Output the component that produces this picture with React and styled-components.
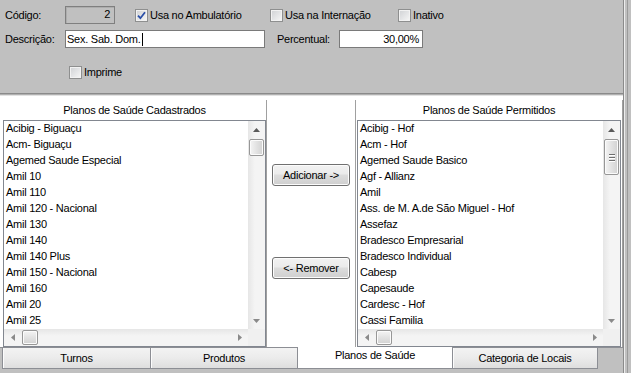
import React from 'react'
import styled, { createGlobalStyle, css } from 'styled-components'

const GlobalStyle = createGlobalStyle`
  * {
    margin: 0;
    padding: 0;
    box-sizing: border-box;
  }
  body {
    background: #c0c0c0;
    font-family: 'Liberation Sans', Arial, sans-serif;
    font-size: 11px;
    letter-spacing: -0.25px;
    color: #000;
  }
`

const Window = styled.div`
  display: flex;
  width: 631px;
  height: 373px;
  overflow: hidden;
  background: #c0c0c0;
`

const Form = styled.div`
  display: flex;
  flex-direction: column;
  width: 624px;
  border-right: 1px solid #8a8a8a;
`

const Edge = styled.div`
  flex: 1;
  background: linear-gradient(to right, #ececec 0 1px, #c0c0c0 1px 3px, #9a9a9a 3px 4px, #c0c0c0 4px);
`

const TopPanel = styled.div`
  display: flex;
  flex-direction: column;
  height: 94px;
  padding: 6px 0 0 5px;
  border-bottom: 1px solid #8a8a8a;
`

const FieldRow = styled.div`
  display: flex;
  align-items: center;
  height: 18px;
  margin-top: ${p => p.$mt || 0}px;
  padding-left: ${p => p.$pl || 0}px;
`

const Label = styled.span`
  flex-shrink: 0;
  width: ${p => p.$w}px;
  margin-left: ${p => p.$ml || 0}px;
  white-space: nowrap;
`

const ReadOnlyBox = styled.div`
  width: 50px;
  height: 18px;
  border: 1px solid #7f7f7f;
  box-shadow: inset 1px 1px 0 #adadad;
  padding-right: 4px;
  text-align: right;
  line-height: 15px;
`

const TextBox = styled.div`
  display: flex;
  align-items: center;
  justify-content: ${p => (p.$right ? 'flex-end' : 'flex-start')};
  width: ${p => p.$w}px;
  height: 18px;
  padding: 0 ${p => (p.$right ? 3 : 1)}px;
  background: #fff;
  border: 1px solid #7a7a7a;
  white-space: nowrap;
`

const Caret = styled.span`
  display: inline-block;
  width: 1px;
  height: 13px;
  margin-left: 1px;
  background: #000;
`

const CheckItem = styled.div`
  display: flex;
  align-items: center;
  gap: 2px;
  width: ${p => (p.$w ? `${p.$w}px` : 'auto')};
  margin-left: ${p => p.$ml || 0}px;
  white-space: nowrap;
`

const Box = styled.span`
  display: flex;
  align-items: center;
  justify-content: center;
  width: 13px;
  height: 13px;
  border: 1px solid #8e8f8f;
  background: linear-gradient(135deg, #cfd1d4, #f7f7f7);
  box-shadow: inset 0 0 0 1px #f2f2f2;
`

const Sep = styled.div`
  height: 2px;
  border-top: 1px solid #b0b0b0;
  border-bottom: 1px solid #e2e2e2;
`

const Page = styled.div`
  display: grid;
  grid-template-columns: 267px 88px 268px;
  height: 252px;
  padding-top: 4px;
  background: #fff;
  border-bottom: 1px solid #8c8e94;
`

const Group = styled.div`
  display: flex;
  flex-direction: column;
  min-height: 0;
  ${p => p.$side === 'left' && css`
    padding-left: 3px;
    border-right: 1px solid #a0a0a0;
  `}
  ${p => p.$side === 'right' && css`
    padding: 0 1px;
    border-left: 1px solid #a0a0a0;
    border-right: 1px solid #a0a0a0;
  `}
`

const GroupTitle = styled.div`
  height: 20px;
  line-height: 20px;
  text-align: center;
  white-space: nowrap;
`

const ListBox = styled.div`
  flex: 1;
  display: grid;
  grid-template-columns: 1fr 17px;
  grid-template-rows: 1fr 17px;
  min-height: 0;
  border: 1px solid #828790;
`

const Items = styled.div`
  overflow: hidden;
  min-height: 0;
`

const Item = styled.div`
  height: 16px;
  line-height: 15px;
  padding-left: 2px;
  white-space: nowrap;
`

const VScroll = styled.div`
  display: flex;
  flex-direction: column;
  min-height: 0;
  background: linear-gradient(to right, #e6e6e6, #f4f4f4 40%, #f4f4f4);
`

const HScroll = styled.div`
  display: flex;
  background: linear-gradient(#e6e6e6, #f4f4f4 40%, #f4f4f4);
`

const Corner = styled.div`
  background: #f0f0f0;
`

const Arrow = styled.div`
  display: flex;
  align-items: center;
  justify-content: center;
  flex-shrink: 0;
  width: 17px;
  height: 17px;
`

const Spacer = styled.div`
  flex: 1;
`

const Thumb = styled.div`
  display: flex;
  flex-direction: ${p => (p.$horizontal ? 'row' : 'column')};
  align-items: center;
  justify-content: center;
  gap: 2px;
  flex-shrink: 0;
  width: ${p => (p.$horizontal ? `${p.$len}px` : '15px')};
  height: ${p => (p.$horizontal ? '15px' : `${p.$len}px`)};
  margin: 1px;
  border: 1px solid #979797;
  border-radius: 2px;
  background: ${p =>
    p.$horizontal
      ? 'linear-gradient(#f4f4f4, #e2e2e2 50%, #d2d2d2)'
      : 'linear-gradient(to right, #f4f4f4, #e2e2e2 50%, #d2d2d2)'};
  box-shadow: inset 0 0 0 1px #fbfbfb;
`

const Grip = styled.span`
  display: block;
  width: 6px;
  height: 1px;
  background: #6e6e6e;
  box-shadow: 0 1px 0 #fff;
`

const Middle = styled.div`
  display: flex;
  flex-direction: column;
  align-items: center;
  padding-top: 64px;
`

const Button = styled.div`
  width: 78px;
  height: 22px;
  margin-top: ${p => p.$mt || 0}px;
  border: 1px solid #707070;
  border-radius: 3px;
  background: linear-gradient(#f2f2f2, #ebebeb 45%, #dddddd 50%, #cfcfcf);
  box-shadow: inset 0 0 0 1px #fcfcfc;
  line-height: 20px;
  text-align: center;
  white-space: nowrap;
`

const TabBar = styled.div`
  display: flex;
  align-items: flex-start;
  height: 22px;
  padding-left: 2px;
`

const Tab = styled.div`
  width: ${p => p.$w}px;
  height: 21px;
  border-right: 1px solid #8c8e94;
  border-bottom: 1px solid #8c8e94;
  border-left: ${p => (p.$first ? '1px solid #8c8e94' : 'none')};
  background: linear-gradient(#f3f3f3, #ebebeb 50%, #dedede);
  box-shadow: inset 1px 0 0 #fcfcfc;
  line-height: 20px;
  text-align: center;
  white-space: nowrap;
  ${p => p.$active && css`
    height: 22px;
    margin-top: -1px;
    background: #fff;
    box-shadow: none;
    line-height: 16px;
  `}
`

const leftItems = [
  'Acibig - Biguaçu',
  'Acm- Biguaçu',
  'Agemed Saude Especial',
  'Amil 10',
  'Amil 110',
  'Amil 120 - Nacional',
  'Amil 130',
  'Amil 140',
  'Amil 140 Plus',
  'Amil 150 - Nacional',
  'Amil 160',
  'Amil 20',
  'Amil 25',
]

const rightItems = [
  'Acibig - Hof',
  'Acm - Hof',
  'Agemed Saude Basico',
  'Agf - Allianz',
  'Amil',
  'Ass. de M. A.de São Miguel - Hof',
  'Assefaz',
  'Bradesco Empresarial',
  'Bradesco Individual',
  'Cabesp',
  'Capesaude',
  'Cardesc - Hof',
  'Cassi Familia',
]

const tabs = [
  { label: 'Turnos', w: 149 },
  { label: 'Produtos', w: 147 },
  { label: 'Planos de Saúde', w: 155, active: true },
  { label: 'Categoria de Locais', w: 145 },
]

const Tri = ({ dir, color = '#5a5a5a' }) => {
  const pts = {
    up: '0,4 3.5,0 7,4',
    down: '0,0 7,0 3.5,4',
    left: '4,0 4,7 0,3.5',
    right: '0,0 4,3.5 0,7',
  }[dir]
  const vertical = dir === 'up' || dir === 'down'
  return (
    <svg width={vertical ? 7 : 4} height={vertical ? 4 : 7} viewBox={vertical ? '0 0 7 4' : '0 0 4 7'}>
      <polygon points={pts} fill={color} />
    </svg>
  )
}

const Check = ({ checked, children, w, ml }) => (
  <CheckItem $w={w} $ml={ml}>
    <Box>
      {checked && (
        <svg width='9' height='9' viewBox='0 0 9 9'>
          <path d='M1 4.6 L3.4 7.2 L8 1.2' stroke='#2a4fa8' strokeWidth='1.8' fill='none' />
        </svg>
      )}
    </Box>
    <span>{children}</span>
  </CheckItem>
)

const List = ({ items, thumb, grip }) => (
  <ListBox>
    <Items>
      {items.map(item => (
        <Item key={item}>{item}</Item>
      ))}
    </Items>
    <VScroll>
      <Arrow><Tri dir='up' /></Arrow>
      <Thumb $len={thumb}>
        {grip && (
          <>
            <Grip />
            <Grip />
            <Grip />
          </>
        )}
      </Thumb>
      <Spacer />
      <Arrow><Tri dir='down' color='#8a8a8a' /></Arrow>
    </VScroll>
    <HScroll>
      <Arrow><Tri dir='left' color='#8a8a8a' /></Arrow>
      <Thumb $horizontal $len={16} />
      <Spacer />
      <Arrow><Tri dir='right' color='#8a8a8a' /></Arrow>
    </HScroll>
    <Corner />
  </ListBox>
)

const App = () => {
  return (
    <>
      <GlobalStyle />
      <Window>
        <Form>
          <TopPanel>
            <FieldRow>
              <Label $w={60}>Código:</Label>
              <ReadOnlyBox>2</ReadOnlyBox>
              <Check checked w={135} ml={20}>Usa no Ambulatório</Check>
              <Check w={128}>Usa na Internação</Check>
              <Check>Inativo</Check>
            </FieldRow>
            <FieldRow $mt={6}>
              <Label $w={60}>Descrição:</Label>
              <TextBox $w={200}>
                Sex. Sab. Dom.<Caret />
              </TextBox>
              <Label $w={62} $ml={12}>Percentual:</Label>
              <TextBox $w={84} $right>30,00%</TextBox>
            </FieldRow>
            <FieldRow $mt={15} $pl={64}>
              <Check>Imprime</Check>
            </FieldRow>
          </TopPanel>
          <Sep />
          <Page>
            <Group $side='left'>
              <GroupTitle>Planos de Saúde Cadastrados</GroupTitle>
              <List items={leftItems} thumb={17} />
            </Group>
            <Middle>
              <Button>Adicionar -&gt;</Button>
              <Button $mt={71}>&lt;- Remover</Button>
            </Middle>
            <Group $side='right'>
              <GroupTitle>Planos de Saúde Permitidos</GroupTitle>
              <List items={rightItems} thumb={36} grip />
            </Group>
          </Page>
          <TabBar>
            {tabs.map((t, i) => (
              <Tab key={t.label} $w={t.w} $first={i === 0} $active={t.active}>
                {t.label}
              </Tab>
            ))}
          </TabBar>
        </Form>
        <Edge />
      </Window>
    </>
  )
}

export default App
